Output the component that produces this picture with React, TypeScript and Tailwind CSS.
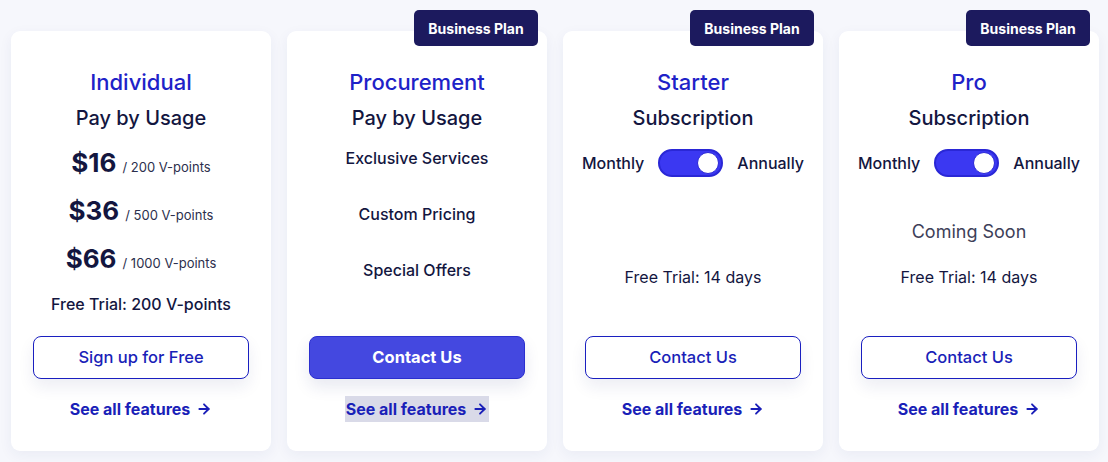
import { ArrowRight } from "lucide-react";

function Badge() {
  return (
    <div className="absolute right-[9px] top-[-21px] flex h-[36px] w-[124px] items-center justify-center rounded-[5px] bg-[#1c1a5e] text-[14px] font-bold text-white">
      Business Plan
    </div>
  );
}

function Toggle() {
  return (
    <div className="flex items-center justify-center gap-[14px] text-[16px] font-medium text-[#13163f]">
      <span>Monthly</span>
      <div className="flex h-[28px] w-[65px] items-center justify-end rounded-full border-2 border-[#2a27d6] bg-[#3b38f2] px-[2px]">
        <div className="h-[22px] w-[22px] rounded-full border border-[#2a27d6] bg-white" />
      </div>
      <span>Annually</span>
    </div>
  );
}

function Footer({ label, filled }: { label: string; filled?: boolean }) {
  return (
    <div className="flex flex-col items-center px-[22px] pb-[29px]">
      <button
        className={
          filled
            ? "h-[43px] w-full rounded-[8px] border border-[#2b2fcf] bg-[#4448e0] text-[16.5px] font-bold text-white shadow-[0_8px_16px_rgba(30,35,120,0.10)]"
            : "h-[43px] w-full rounded-[8px] border-[1.5px] border-[#1a1fc0] bg-white text-[16.5px] font-medium text-[#1a1fb8] shadow-[0_8px_16px_rgba(30,35,120,0.08)]"
        }
      >
        {label}
      </button>
      <a
        className={
          "mt-[17px] flex h-[26px] items-center gap-[6px] px-[1px] text-[16px] font-bold text-[#1a1fb8] " +
          (filled ? "bg-[#d9dae8]" : "")
        }
      >
        See all features
        <ArrowRight className="h-[16px] w-[16px]" strokeWidth={2.75} />
      </a>
    </div>
  );
}

function Header({ title, sub }: { title: string; sub: string }) {
  return (
    <div className="flex flex-col items-center pt-[37px]">
      <div className="text-[22px] font-medium leading-[28px] text-[#1e22c8]">{title}</div>
      <div className="mt-[8px] text-[20px] font-medium leading-[28px] text-[#13163f]">{sub}</div>
    </div>
  );
}

function Card({ children, badge }: { children: React.ReactNode; badge?: boolean }) {
  return (
    <div className="relative flex h-[420px] w-[260px] flex-col rounded-[9px] bg-white shadow-[0_4px_14px_rgba(40,50,120,0.06)]">
      {badge && <Badge />}
      {children}
    </div>
  );
}

function Price({ amount, points }: { amount: string; points: string }) {
  return (
    <div className="flex h-[36px] items-baseline justify-center gap-[6px] leading-[36px]">
      <span className="text-[26px] font-bold text-[#13163f]">{amount}</span>
      <span className="text-[13px] text-[#2c2f4d]">/ {points} V-points</span>
    </div>
  );
}

export default function App() {
  return (
    <div
      className="h-[462px] w-[1108px] bg-[#f6f7fc] pl-[11px] pt-[31px]"
      style={{ fontFamily: "Inter, 'Noto Sans', sans-serif" }}
    >
      <div className="flex gap-[16px]">
        <Card>
          <Header title="Individual" sub="Pay by Usage" />
          <div className="flex flex-1 flex-col items-center">
            <div className="mt-[13px] flex flex-col gap-[12px]">
              <Price amount="$16" points="200" />
              <Price amount="$36" points="500" />
              <Price amount="$66" points="1000" />
            </div>
            <div className="mt-[15px] text-[16px] font-medium leading-[24px] text-[#13163f]">
              Free Trial: 200 V-points
            </div>
          </div>
          <Footer label="Sign up for Free" />
        </Card>

        <Card badge>
          <Header title="Procurement" sub="Pay by Usage" />
          <div className="mt-[14px] flex flex-1 flex-col items-center gap-[32px] text-[16px] font-medium leading-[24px] text-[#13163f]">
            <div>Exclusive Services</div>
            <div>Custom Pricing</div>
            <div>Special Offers</div>
          </div>
          <Footer label="Contact Us" filled />
        </Card>

        <Card badge>
          <Header title="Starter" sub="Subscription" />
          <div className="flex flex-1 flex-col items-center">
            <div className="mt-[17px]">
              <Toggle />
            </div>
            <div className="mt-[88px] text-[16px] leading-[24px] text-[#13163f]">Free Trial: 14 days</div>
          </div>
          <Footer label="Contact Us" />
        </Card>

        <Card badge>
          <Header title="Pro" sub="Subscription" />
          <div className="flex flex-1 flex-col items-center">
            <div className="mt-[17px]">
              <Toggle />
            </div>
            <div className="mt-[43px] text-[18px] leading-[24px] text-[#3d4058]">Coming Soon</div>
            <div className="mt-[21px] text-[16px] leading-[24px] text-[#13163f]">Free Trial: 14 days</div>
          </div>
          <Footer label="Contact Us" />
        </Card>
      </div>
    </div>
  );
}
